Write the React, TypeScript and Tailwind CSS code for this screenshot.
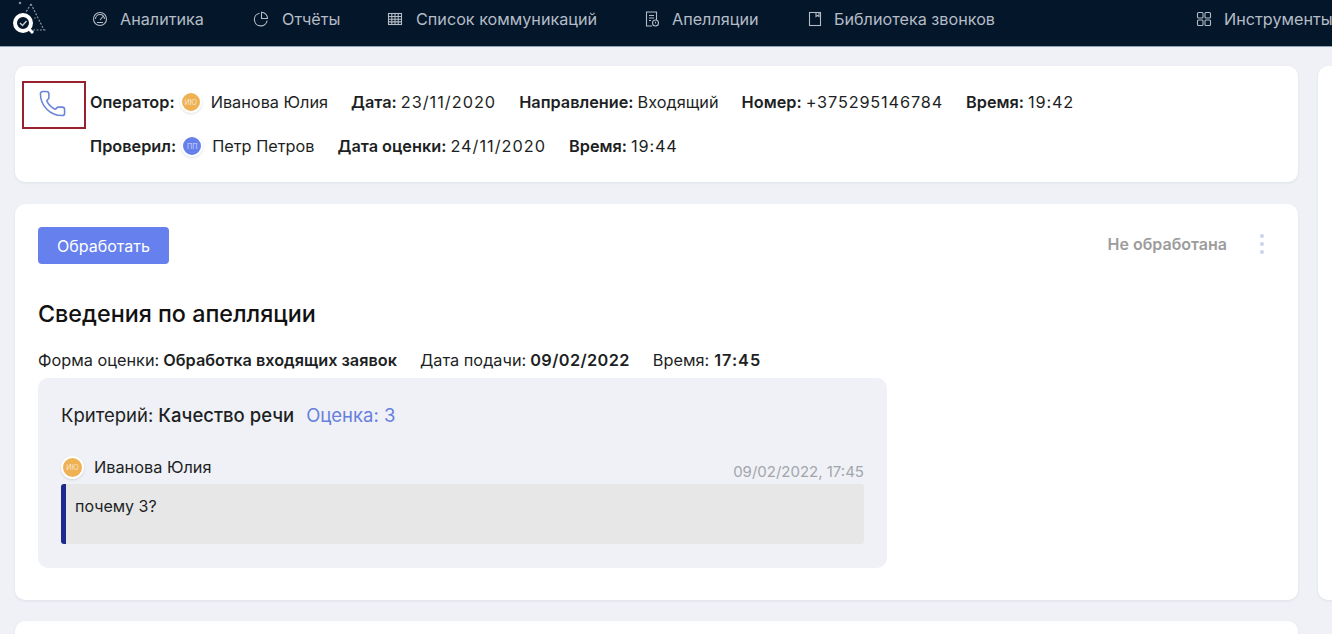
import { Phone } from "lucide-react";
import type { ReactNode } from "react";

function NavIcon({ children }: { children: ReactNode }) {
  return (
    <svg width="16" height="16" viewBox="0 0 16 16" fill="none" stroke="currentColor" strokeWidth="1.1" className="shrink-0">
      {children}
    </svg>
  );
}

const nav: { label: string; width: string; gap: string; icon: ReactNode }[] = [
  {
    label: "Аналитика",
    width: "w-[161px]",
    gap: "gap-[12px]",
    icon: (
      <>
        <circle cx="8" cy="8" r="6.5" />
        <path d="M3.5 8a4.5 4.5 0 0 1 9 0M8 9l3-3.5M5 11.5h6" />
      </>
    ),
  },
  {
    label: "Отчёты",
    width: "w-[134px]",
    gap: "gap-[13px]",
    icon: (
      <>
        <path d="M6.5 2.2a6.4 6.4 0 1 0 7.6 7.4" />
        <path d="M8.5 1.2a6.3 6.3 0 0 1 6 6.3h-6z" />
      </>
    ),
  },
  {
    label: "Список коммуникаций",
    width: "w-[257px]",
    gap: "gap-[13px]",
    icon: (
      <>
        <rect x="1.5" y="2.5" width="13" height="11" />
        <path d="M1.5 5.5h13M1.5 8.2h13M1.5 10.9h13M4.8 2.5v11M8 2.5v11M11.2 2.5v11" />
      </>
    ),
  },
  {
    label: "Апелляции",
    width: "w-[163px]",
    gap: "gap-[12px]",
    icon: (
      <>
        <path d="M8 15H2.5V1h10v8" />
        <path d="M5 4.5h5M5 7h5M5 9.5h2" />
        <circle cx="11.5" cy="12" r="3" />
        <path d="M11.5 10.8v1.6" />
      </>
    ),
  },
  {
    label: "Библиотека звонков",
    width: "w-[389px]",
    gap: "gap-[11px]",
    icon: (
      <>
        <rect x="2.5" y="1.5" width="11" height="13" />
        <path d="M9 1.5v4l1.5-1 1.5 1v-4" />
      </>
    ),
  },
  {
    label: "Инструменты",
    width: "w-[140px]",
    gap: "gap-[12px]",
    icon: (
      <>
        <rect x="1.5" y="1.5" width="5.5" height="5.5" rx="1" />
        <rect x="9" y="1.5" width="5.5" height="5.5" rx="1" />
        <rect x="1.5" y="9" width="5.5" height="5.5" rx="1" />
        <rect x="9" y="9" width="5.5" height="5.5" rx="1" />
      </>
    ),
  },
];

function Avatar({ initials, color, size }: { initials: string; color: string; size: string }) {
  return (
    <span className={`flex shrink-0 items-center justify-center rounded-full border-2 border-white text-[7px] leading-none text-white/70 shadow-sm ${size} ${color}`}>
      {initials}
    </span>
  );
}

function Logo() {
  return (
    <svg width="46" height="40" viewBox="0 0 46 40" fill="none" className="shrink-0">
      <path d="M31 4 L44 30 M31 4 L26 12 M33 30 H46" stroke="#8a96a6" strokeWidth="1.2" strokeDasharray="2 1.5" />
      <circle cx="20" cy="3" r="1.3" fill="#7f8a99" />
      <circle cx="35" cy="18" r="0.8" fill="#7f8a99" />
      <circle cx="23" cy="23" r="8" stroke="#fff" strokeWidth="4" />
      <path d="M29 29 L33 33" stroke="#fff" strokeWidth="3" />
      <path d="M20 23 L22.5 25.5 L26.5 21" stroke="#c8ced6" strokeWidth="1.4" />
    </svg>
  );
}

export default function App() {
  return (
    <div className="flex h-[634px] w-[1332px] flex-col overflow-hidden bg-[#eff1f6] font-['Inter',sans-serif] text-[16.3px] text-[#1d1f24]">
      <header className="flex h-[47px] shrink-0 items-start overflow-hidden border-b border-[#8fa0b3] bg-[#04162a] text-[16.2px] text-[#b4bcc6]">
        <div className="w-[92px] shrink-0">
          <Logo />
        </div>
        {nav.map((item) => (
          <div key={item.label} className={`mt-[7px] flex h-[24px] shrink-0 items-center whitespace-nowrap ${item.width} ${item.gap}`}>
            <NavIcon>{item.icon}</NavIcon>
            <span>{item.label}</span>
          </div>
        ))}
      </header>

      <div className="flex min-h-0 flex-1 gap-[20px] pl-[15px] pt-[19px]">
        <main className="flex w-[1283px] shrink-0 flex-col gap-[22px]">
          <section className="relative h-[116px] shrink-0 rounded-[10px] bg-white pl-[75px] pt-[25px] shadow-[0_1px_3px_rgba(30,40,70,0.08)]">
            <div className="absolute left-[7px] top-[15px] flex h-[48px] w-[64px] items-center justify-center border-2 border-[#97212e]">
              <Phone size={29} strokeWidth={1.3} className="mb-[4px] mr-[4px] text-[#6a84da]" />
            </div>
            <div className="flex h-[22px] items-center whitespace-nowrap">
              <b className="font-semibold">Оператор:</b>
              <Avatar initials="ИЮ" color="bg-[#eeb255]" size="ml-[5px] h-[22px] w-[22px]" />
              <span className="ml-[9px]">Иванова Юлия</span>
              <b className="ml-[23px] font-semibold">Дата:</b>
              <span className="ml-[4px] tracking-[1px]">23/11/2020</span>
              <b className="ml-[23px] font-semibold">Направление:</b>
              <span className="ml-[4px]">Входящий</span>
              <b className="ml-[23px] font-semibold">Номер:</b>
              <span className="ml-[4px] tracking-[0.85px]">+375295146784</span>
              <b className="ml-[23px] font-semibold">Время:</b>
              <span className="ml-[4px] tracking-[0.85px]">19:42</span>
            </div>
            <div className="mt-[22px] flex h-[22px] items-center whitespace-nowrap">
              <b className="font-semibold">Проверил:</b>
              <Avatar initials="ПП" color="bg-[#6580ea]" size="ml-[5px] h-[22px] w-[22px]" />
              <span className="ml-[9px]">Петр Петров</span>
              <b className="ml-[23px] font-semibold">Дата оценки:</b>
              <span className="ml-[4px] tracking-[1px]">24/11/2020</span>
              <b className="ml-[23px] font-semibold">Время:</b>
              <span className="ml-[4px] tracking-[0.85px]">19:44</span>
            </div>
          </section>

          <section className="h-[396px] shrink-0 rounded-[10px] bg-white pl-[23px] pr-[34px] pt-[23px] shadow-[0_1px_3px_rgba(30,40,70,0.08)]">
            <div className="flex items-start justify-between">
              <button className="h-[37px] w-[131px] rounded-[4px] bg-[#6680ee] text-[16px] text-white">Обработать</button>
              <div className="flex items-center gap-[33px] pt-[5px]">
                <span className="text-[16px] font-semibold text-[#9c9c9c]">Не обработана</span>
                <span className="flex flex-col gap-[4px]">
                  <i className="h-[4px] w-[4px] rounded-full bg-[#cbd3ec]" />
                  <i className="h-[4px] w-[4px] rounded-full bg-[#cbd3ec]" />
                  <i className="h-[4px] w-[4px] rounded-full bg-[#cbd3ec]" />
                </span>
              </div>
            </div>
            <h2 className="mt-[35px] text-[23.3px] font-medium leading-[30px] text-[#111]">Сведения по апелляции</h2>
            <div className="mt-[21px] flex h-[20px] items-center whitespace-nowrap">
              <span>Форма оценки:</span>
              <b className="ml-[4px] font-semibold">Обработка входящих заявок</b>
              <span className="ml-[23px]">Дата подачи:</span>
              <b className="ml-[4px] font-semibold tracking-[0.4px]">09/02/2022</b>
              <span className="ml-[23px]">Время:</span>
              <b className="ml-[5px] font-semibold tracking-[1px]">17:45</b>
            </div>
            <div className="mt-[8px] h-[190px] w-[849px] rounded-[10px] bg-[#eff1f6] px-[23px] pt-[26px]">
              <div className="flex h-[24px] items-center text-[18.5px]">
                <span>Критерий:</span>
                <span className="ml-[5px] font-medium">Качество речи</span>
                <span className="ml-[12px] text-[#6680dd]">Оценка: 3</span>
              </div>
              <div className="mt-[27px] flex h-[24px] items-center justify-between">
                <div className="flex items-center">
                  <Avatar initials="ИЮ" color="bg-[#eeb255]" size="h-[23px] w-[23px]" />
                  <span className="ml-[10px]">Иванова Юлия</span>
                </div>
                <span className="mt-[10px] text-[15px] text-[#a3a6ac]">09/02/2022, 17:45</span>
              </div>
              <div className="mt-[5px] h-[60px] rounded-[3px] border-l-[5px] border-[#1c2a8c] bg-[#e7e7e8] pl-[9px] pt-[12px] text-[16px] leading-[20px]">
                почему 3?
              </div>
            </div>
          </section>

          <section className="-mt-px h-[60px] shrink-0 rounded-[10px] bg-white shadow-[0_1px_3px_rgba(30,40,70,0.08)]" />
        </main>
        <aside className="h-[534px] w-[40px] shrink-0 rounded-[10px] bg-white shadow-[0_1px_3px_rgba(30,40,70,0.08)]" />
      </div>
    </div>
  );
}
